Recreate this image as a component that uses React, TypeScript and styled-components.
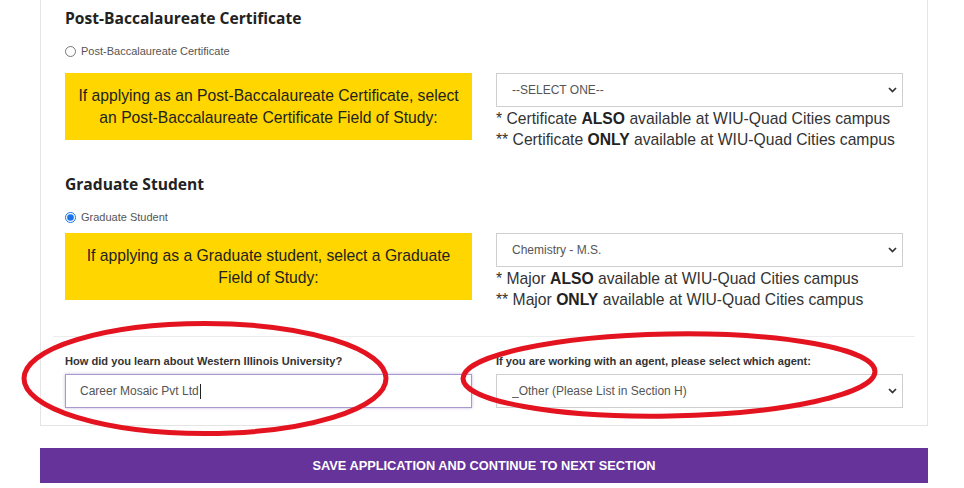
import React from "react";
import styled, { createGlobalStyle } from "styled-components";

const Global = createGlobalStyle`
  html, body { margin: 0; padding: 0; background: #ffffff; }
  body { font-family: "Liberation Sans", Arial, sans-serif; color: #333; }
  * { box-sizing: border-box; }
`;

const Page = styled.div`
  position: relative;
  width: 964px;
  height: 488px;
  overflow: hidden;
  padding-left: 40px;
`;

const Card = styled.div`
  width: 888px;
  border: 1px solid #e4e4e4;
  border-top: none;
  padding: 0 24px 17px;
  display: flex;
  flex-direction: column;
`;

const Heading = styled.h3<{ $top: number }>`
  margin: ${(p) => p.$top}px 0 0;
  font-family: "Open Sans", sans-serif;
  font-weight: 700;
  font-size: 15.6px;
  line-height: 20px;
  color: #222;
`;

const RadioRow = styled.label<{ $top: number }>`
  margin-top: ${(p) => p.$top}px;
  display: flex;
  align-items: center;
  gap: 5px;
  height: 14px;
  font-size: 11px;
  color: #555;
`;

const Radio = styled.input`
  width: 11px;
  height: 11px;
  margin: 0;
  accent-color: #1a73e8;
`;

const Row = styled.div<{ $top: number }>`
  margin-top: ${(p) => p.$top}px;
  display: grid;
  grid-template-columns: 1fr 1fr;
  column-gap: 24px;
  align-items: start;
`;

const Callout = styled.div`
  background: #ffd600;
  color: #222;
  font-size: 15.7px;
  line-height: 22px;
  text-align: center;
  padding: 11.5px 8px;
  min-height: 67px;
`;

const SelectWrap = styled.div`
  position: relative;
  height: 34px;
`;

const Select = styled.select`
  appearance: none;
  width: 100%;
  height: 34px;
  border: 1px solid #cfcfcf;
  background: #fff;
  padding: 0 30px 0 15px;
  font-family: "Liberation Sans", Arial, sans-serif;
  font-size: 12px;
  color: #555;
  outline: none;
`;

const Chevron = styled.svg`
  position: absolute;
  right: 6px;
  top: 14px;
  pointer-events: none;
`;

const Notes = styled.div`
  margin-top: 1px;
  font-size: 15.7px;
  line-height: 21px;
  color: #333;
  b { color: #222; }
`;

const Divider = styled.hr`
  margin: 26px -12px 0;
  border: none;
  border-top: 1px solid #ececec;
`;

const Field = styled.div`
  display: flex;
  flex-direction: column;
  gap: 6px;
`;

const FieldLabel = styled.div`
  font-size: 11.1px;
  line-height: 13px;
  font-weight: 700;
  color: #333;
`;

const FakeInput = styled.div`
  height: 34px;
  border: 1px solid #a898cc;
  box-shadow: 0 0 3px rgba(102, 51, 153, 0.35);
  padding: 0 14px;
  display: flex;
  align-items: center;
  font-size: 12px;
  color: #555;
`;

const Caret = styled.span`
  display: inline-block;
  width: 1px;
  height: 15px;
  background: #222;
  margin-left: 1px;
`;

const SaveButton = styled.button`
  margin-top: 22px;
  width: 888px;
  height: 35px;
  border: none;
  background: #65339a;
  color: #fff;
  font-family: "Liberation Sans", Arial, sans-serif;
  font-weight: 700;
  font-size: 12.8px;
  text-transform: uppercase;
  cursor: pointer;
`;

const Annotations = styled.svg`
  position: absolute;
  left: 0;
  top: 0;
  pointer-events: none;
`;

const ChevronIcon = () => (
  <Chevron width="9" height="6" viewBox="0 0 9 6">
    <polyline points="1,1 4.5,4.5 8,1" fill="none" stroke="#333" strokeWidth="1.7" />
  </Chevron>
);

const Dropdown = ({ value }: { value: string }) => (
  <SelectWrap>
    <Select defaultValue={value}>
      <option>{value}</option>
    </Select>
    <ChevronIcon />
  </SelectWrap>
);

export default function App() {
  return (
    <Page>
      <Global />
      <Card>
        <Heading $top={8}>Post-Baccalaureate Certificate</Heading>
        <RadioRow $top={16}>
          <Radio type="radio" name="type" />
          Post-Baccalaureate Certificate
        </RadioRow>
        <Row $top={15}>
          <Callout>
            If applying as an Post-Baccalaureate Certificate, select an Post-Baccalaureate Certificate Field of Study:
          </Callout>
          <div>
            <Dropdown value="--SELECT ONE--" />
            <Notes>
              * Certificate <b>ALSO</b> available at WIU-Quad Cities campus
              <br />
              ** Certificate <b>ONLY</b> available at WIU-Quad Cities campus
            </Notes>
          </div>
        </Row>

        <Heading $top={24}>Graduate Student</Heading>
        <RadioRow $top={16}>
          <Radio type="radio" name="type" defaultChecked />
          Graduate Student
        </RadioRow>
        <Row $top={9}>
          <Callout>If applying as a Graduate student, select a Graduate Field of Study:</Callout>
          <div>
            <Dropdown value="Chemistry - M.S." />
            <Notes>
              * Major <b>ALSO</b> available at WIU-Quad Cities campus
              <br />
              ** Major <b>ONLY</b> available at WIU-Quad Cities campus
            </Notes>
          </div>
        </Row>

        <Divider />

        <Row $top={18}>
          <Field>
            <FieldLabel>How did you learn about Western Illinois University?</FieldLabel>
            <FakeInput>
              Career Mosaic Pvt Ltd
              <Caret />
            </FakeInput>
          </Field>
          <Field>
            <FieldLabel>If you are working with an agent, please select which agent:</FieldLabel>
            <Dropdown value="_Other (Please List in Section H)" />
          </Field>
        </Row>
      </Card>
      <SaveButton>Save Application and Continue to Next Section</SaveButton>

      <Annotations width="964" height="488" viewBox="0 0 964 488">
        <g fill="none" stroke="#e3141f" strokeWidth="5">
          <ellipse cx="205" cy="378.5" rx="181" ry="55" />
          <ellipse cx="669" cy="375" rx="206" ry="41" transform="rotate(-1 669 375)" />
        </g>
      </Annotations>
    </Page>
  );
}
